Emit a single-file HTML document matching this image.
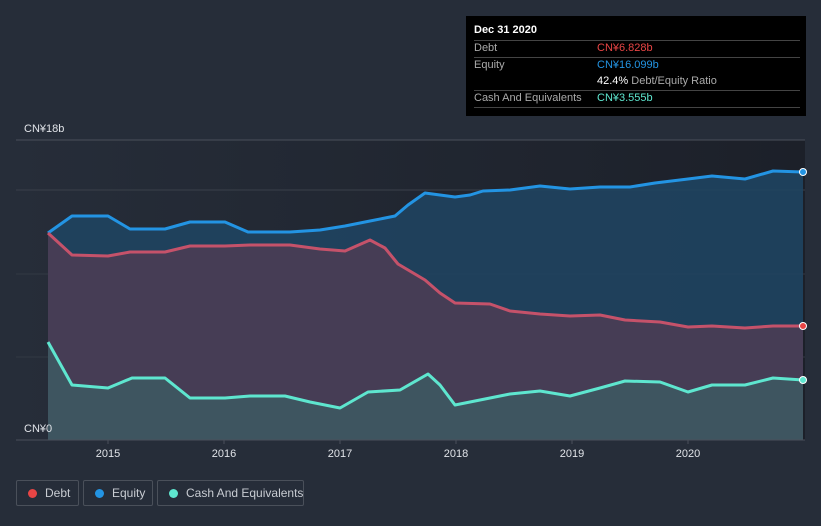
<!DOCTYPE html>
<html style="overflow:hidden;width:821px;height:526px"><head><style>
body{margin:0;width:821px;height:526px;background:#262d39;font-family:"Liberation Sans","Noto Sans CJK SC",sans-serif;overflow:hidden;position:relative}
.tt{position:absolute;left:466px;top:16px;width:340px;height:100px;background:#000;color:#aaa;font-size:11px}
.tt .r{position:absolute;left:8px;width:326px;border-top:1px solid #444}
.lg{position:absolute;top:480px;height:26px;border:1px solid #4a505a;border-radius:2px;color:#c8ccd2;font-size:12px;line-height:24px;box-sizing:border-box;white-space:nowrap}
.lg i{position:absolute;left:11px;top:8px;width:9px;height:9px;border-radius:50%}
</style></head><body>
<svg width="821" height="526" style="position:absolute;left:0;top:0">
<defs><linearGradient id="bg" x1="0" x2="1"><stop offset="0" stop-color="#262d39"/><stop offset="1" stop-color="#1c2029"/></linearGradient></defs>
<rect x="16" y="140" width="789" height="300" fill="url(#bg)"/>
<line x1="16" y1="140" x2="805" y2="140" stroke="#4a505a"/>
<line x1="16" y1="190" x2="805" y2="190" stroke="#3a404a"/>
<line x1="16" y1="274" x2="805" y2="274" stroke="#333944"/>
<line x1="16" y1="357" x2="805" y2="357" stroke="#333944"/>
<polygon fill="#1f4461" opacity="0.9" points="48,233 72,216 108,216 130,229 165,229 190,222 225,222 248,232 290,232 320,230 345,226 370,221 395,216 408,205 425,193 440,195 455,197 470,195 483,191 510,190 540,186 570,189 600,187 630,187 655,183 688,179 712,176 745,179 773,171 803,172 803,440 48,440"/>
<polygon fill="#463d55" points="48,233 72,255 108,256 130,252 165,252 190,246 225,246 250,245 290,245 320,249 345,251 370,240 385,248 398,264 425,280 440,293 455,303 490,304 510,311 540,314 570,316 600,315 625,320 660,322 688,327 712,326 745,328 773,326 803,326 803,440 48,440"/>
<polygon fill="#3e5560" points="48,342 72,385 108,388 132,378 165,378 190,398 225,398 250,396 285,396 310,402 340,408 368,392 400,390 428,374 440,385 455,405 480,400 510,394 540,391 570,396 600,388 625,381 660,382 688,392 712,385 745,385 773,378 803,380 803,440 48,440"/>
<polyline fill="none" stroke="#2394e3" stroke-width="3" stroke-linejoin="round" points="48,233 72,216 108,216 130,229 165,229 190,222 225,222 248,232 290,232 320,230 345,226 370,221 395,216 408,205 425,193 440,195 455,197 470,195 483,191 510,190 540,186 570,189 600,187 630,187 655,183 688,179 712,176 745,179 773,171 803,172"/>
<polyline fill="none" stroke="#c5526a" stroke-width="3" stroke-linejoin="round" points="48,233 72,255 108,256 130,252 165,252 190,246 225,246 250,245 290,245 320,249 345,251 370,240 385,248 398,264 425,280 440,293 455,303 490,304 510,311 540,314 570,316 600,315 625,320 660,322 688,327 712,326 745,328 773,326 803,326"/>
<polyline fill="none" stroke="#5ee6cf" stroke-width="3" stroke-linejoin="round" points="48,342 72,385 108,388 132,378 165,378 190,398 225,398 250,396 285,396 310,402 340,408 368,392 400,390 428,374 440,385 455,405 480,400 510,394 540,391 570,396 600,388 625,381 660,382 688,392 712,385 745,385 773,378 803,380"/>
<circle cx="803" cy="172" r="3.5" fill="#2394e3" stroke="#fff" stroke-width="1"/>
<circle cx="803" cy="326" r="3.5" fill="#e84545" stroke="#fff" stroke-width="1"/>
<circle cx="803" cy="380" r="3.5" fill="#5ee6cf" stroke="#fff" stroke-width="1"/>
<line x1="16" y1="440" x2="805" y2="440" stroke="#4a505a"/>
<g stroke="#4a505a"><line x1="108" y1="440" x2="108" y2="444"/><line x1="224" y1="440" x2="224" y2="444"/><line x1="340" y1="440" x2="340" y2="444"/><line x1="456" y1="440" x2="456" y2="444"/><line x1="572" y1="440" x2="572" y2="444"/><line x1="688" y1="440" x2="688" y2="444"/></g>
<g fill="#e0e3e8" font-size="11" text-anchor="middle"><text x="108" y="457">2015</text><text x="224" y="457">2016</text><text x="340" y="457">2017</text><text x="456" y="457">2018</text><text x="572" y="457">2019</text><text x="688" y="457">2020</text></g>
<text x="24" y="132" fill="#e0e3e8" font-size="11">CN¥18b</text>
<text x="24" y="432" fill="#e0e3e8" font-size="11">CN¥0</text>
</svg>
<div class="tt">
<div style="position:absolute;left:8px;top:8px;color:#fff;font-weight:bold">Dec 31 2020</div>
<div class="r" style="top:24px"></div>
<div style="position:absolute;left:8px;top:26px">Debt</div><div style="position:absolute;left:131px;top:26px;color:#e84545">CN¥6.828b</div>
<div class="r" style="top:41px"></div>
<div style="position:absolute;left:8px;top:43px">Equity</div><div style="position:absolute;left:131px;top:43px;color:#2394e3">CN¥16.099b</div>
<div style="position:absolute;left:131px;top:59px"><span style="color:#fff">42.4%</span> Debt/Equity Ratio</div>
<div class="r" style="top:74px"></div>
<div style="position:absolute;left:8px;top:76px">Cash And Equivalents</div><div style="position:absolute;left:131px;top:76px;color:#5ee6cf">CN¥3.555b</div>
<div class="r" style="top:91px"></div>
</div>
<div class="lg" style="left:16px;width:63px"><i style="background:#e84545"></i><span style="position:absolute;left:28px">Debt</span></div>
<div class="lg" style="left:83px;width:70px"><i style="background:#2394e3"></i><span style="position:absolute;left:28px">Equity</span></div>
<div class="lg" style="left:157px;width:147px"><i style="background:#5ee6cf"></i><span style="position:absolute;left:28px">Cash And Equivalents</span></div>
</body></html>
